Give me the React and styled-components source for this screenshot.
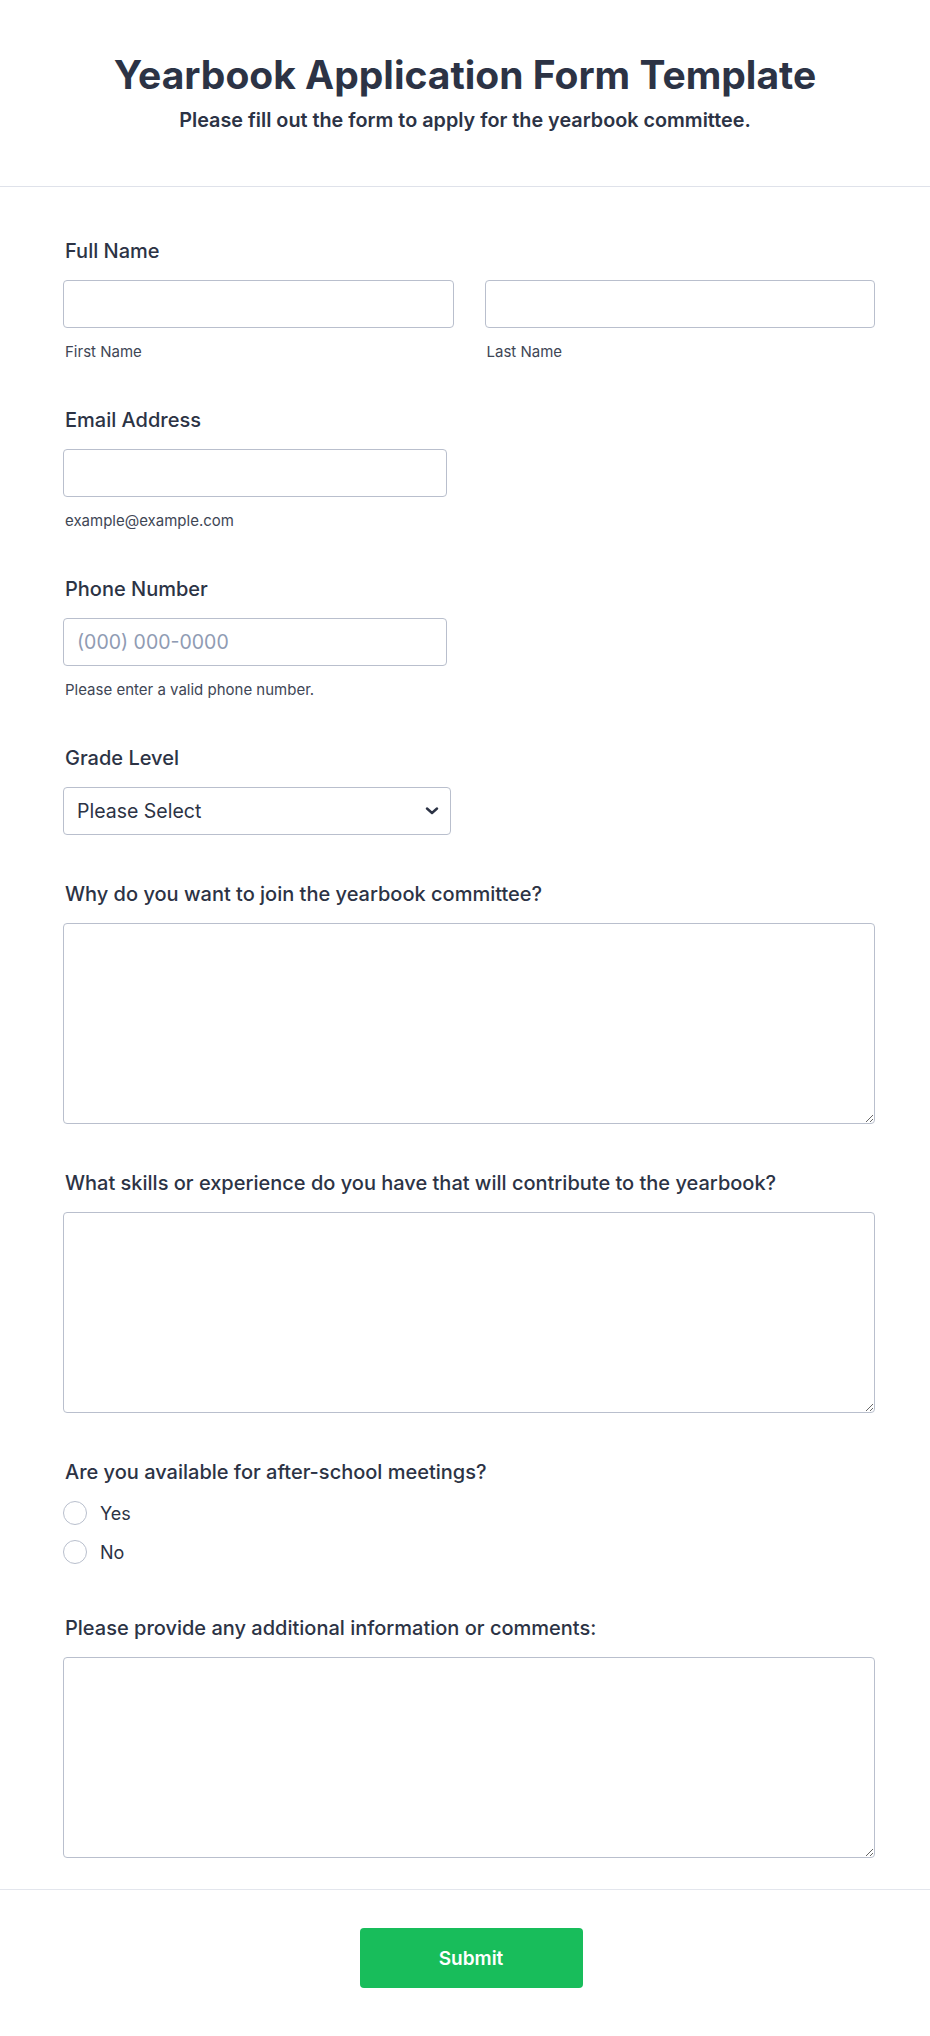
import React from 'react';
import styled, { createGlobalStyle } from 'styled-components';

const GlobalStyle = createGlobalStyle`
  html, body {
    margin: 0;
    padding: 0;
    background: #fff;
  }
  body {
    font-family: Inter, "Noto Sans", "Liberation Sans", sans-serif;
    color: #2c3345;
  }
  * {
    box-sizing: border-box;
  }
`;

const Page = styled.div`
  width: 930px;
  min-height: 2036px;
  background: #fff;
`;

const Header = styled.header`
  padding: 51px 0 54px;
  text-align: center;
  border-bottom: 1px solid #dfe2ea;
`;

const Title = styled.h1`
  margin: 0;
  font-size: 39px;
  line-height: 47px;
  font-weight: 700;
  color: #2c3345;
`;

const Subtitle = styled.p`
  margin: 10px 0 0;
  font-size: 19.8px;
  line-height: 24px;
  font-weight: 600;
  color: #2c3345;
`;

const Form = styled.form`
  display: flex;
  flex-direction: column;
  gap: 47px;
  padding: 52px 55px 31px 63px;
`;

const Field = styled.div`
  display: flex;
  flex-direction: column;
  padding-bottom: ${(p) => p.$extra || 0}px;
`;

const Label = styled.label`
  display: block;
  padding-left: 2px;
  margin-bottom: 17px;
  font-size: 20px;
  line-height: 24px;
  font-weight: 500;
  color: #2c3345;
`;

const Row = styled.div`
  display: grid;
  grid-template-columns: 1fr 1fr;
  gap: 31px;
`;

const Col = styled.div`
  display: flex;
  flex-direction: column;
`;

const Input = styled.input`
  width: ${(p) => p.$width || '100%'};
  height: 48px;
  padding: 0 13px;
  border: 1px solid #b9bfcd;
  border-radius: 4px;
  background: #fff;
  font-family: inherit;
  font-size: 19.5px;
  color: #2c3345;
  outline: none;

  &::placeholder {
    color: #8f9bb3;
  }
`;

const SubLabel = styled.span`
  display: block;
  margin-top: 15px;
  padding-left: 2px;
  font-size: 15px;
  line-height: 18px;
  color: #3e4655;
`;

const SelectBox = styled.div`
  position: relative;
  width: 388px;
`;

const Select = styled.select`
  appearance: none;
  width: 100%;
  height: 48px;
  padding: 0 40px 0 13px;
  border: 1px solid #b9bfcd;
  border-radius: 4px;
  background: #fff;
  font-family: inherit;
  font-size: 19.5px;
  color: #2c3345;
  outline: none;
`;

const Chevron = styled.svg`
  position: absolute;
  right: 12px;
  top: 50%;
  width: 14px;
  height: 8px;
  margin-top: -4px;
  pointer-events: none;
`;

const TextArea = styled.textarea`
  display: block;
  width: 100%;
  height: 201px;
  padding: 10px 14px;
  border: 1px solid #b9bfcd;
  border-radius: 4px;
  background: #fff;
  font-family: inherit;
  font-size: 19px;
  color: #2c3345;
  resize: vertical;
  outline: none;
`;

const RadioList = styled.div`
  display: flex;
  flex-direction: column;
  gap: 15px;
`;

const RadioRow = styled.label`
  display: flex;
  align-items: center;
  gap: 13px;
  height: 24px;
  font-size: 18px;
  color: #2c3345;
  cursor: pointer;
`;

const RadioCircle = styled.input.attrs({ type: 'radio' })`
  appearance: none;
  width: 24px;
  height: 24px;
  margin: 0;
  border: 1px solid #b9bfcd;
  border-radius: 50%;
  background: #fff;
`;

const Footer = styled.div`
  display: flex;
  justify-content: center;
  padding: 38px 0 49px 12px;
  border-top: 1px solid #e3e6ed;
`;

const SubmitButton = styled.button`
  width: 223px;
  height: 60px;
  border: none;
  border-radius: 4px;
  background: #18bd5b;
  color: #fff;
  font-family: inherit;
  font-size: 19px;
  font-weight: 600;
  cursor: pointer;
`;

const App = () => {
  return (
    <Page>
      <GlobalStyle />
      <Header>
        <Title>Yearbook Application Form Template</Title>
        <Subtitle>Please fill out the form to apply for the yearbook committee.</Subtitle>
      </Header>

      <Form onSubmit={(e) => e.preventDefault()}>
        <Field>
          <Label>Full Name</Label>
          <Row>
            <Col>
              <Input type="text" />
              <SubLabel>First Name</SubLabel>
            </Col>
            <Col>
              <Input type="text" />
              <SubLabel>Last Name</SubLabel>
            </Col>
          </Row>
        </Field>

        <Field>
          <Label>Email Address</Label>
          <Input type="email" $width="384px" />
          <SubLabel>example@example.com</SubLabel>
        </Field>

        <Field>
          <Label>Phone Number</Label>
          <Input type="tel" $width="384px" placeholder="(000) 000-0000" />
          <SubLabel>Please enter a valid phone number.</SubLabel>
        </Field>

        <Field>
          <Label>Grade Level</Label>
          <SelectBox>
            <Select defaultValue="">
              <option value="">Please Select</option>
              <option>Freshman</option>
              <option>Sophomore</option>
              <option>Junior</option>
              <option>Senior</option>
            </Select>
            <Chevron viewBox="0 0 14 8">
              <path d="M2 1.5 L7 6 L12 1.5" fill="none" stroke="#2c3345" strokeWidth="2.4" strokeLinecap="round" strokeLinejoin="round" />
            </Chevron>
          </SelectBox>
        </Field>

        <Field>
          <Label>Why do you want to join the yearbook committee?</Label>
          <TextArea />
        </Field>

        <Field>
          <Label>What skills or experience do you have that will contribute to the yearbook?</Label>
          <TextArea />
        </Field>

        <Field $extra={5}>
          <Label>Are you available for after-school meetings?</Label>
          <RadioList>
            <RadioRow>
              <RadioCircle name="meetings" value="yes" />
              Yes
            </RadioRow>
            <RadioRow>
              <RadioCircle name="meetings" value="no" />
              No
            </RadioRow>
          </RadioList>
        </Field>

        <Field>
          <Label>Please provide any additional information or comments:</Label>
          <TextArea />
        </Field>
      </Form>

      <Footer>
        <SubmitButton type="submit">Submit</SubmitButton>
      </Footer>
    </Page>
  );
};

export default App;
